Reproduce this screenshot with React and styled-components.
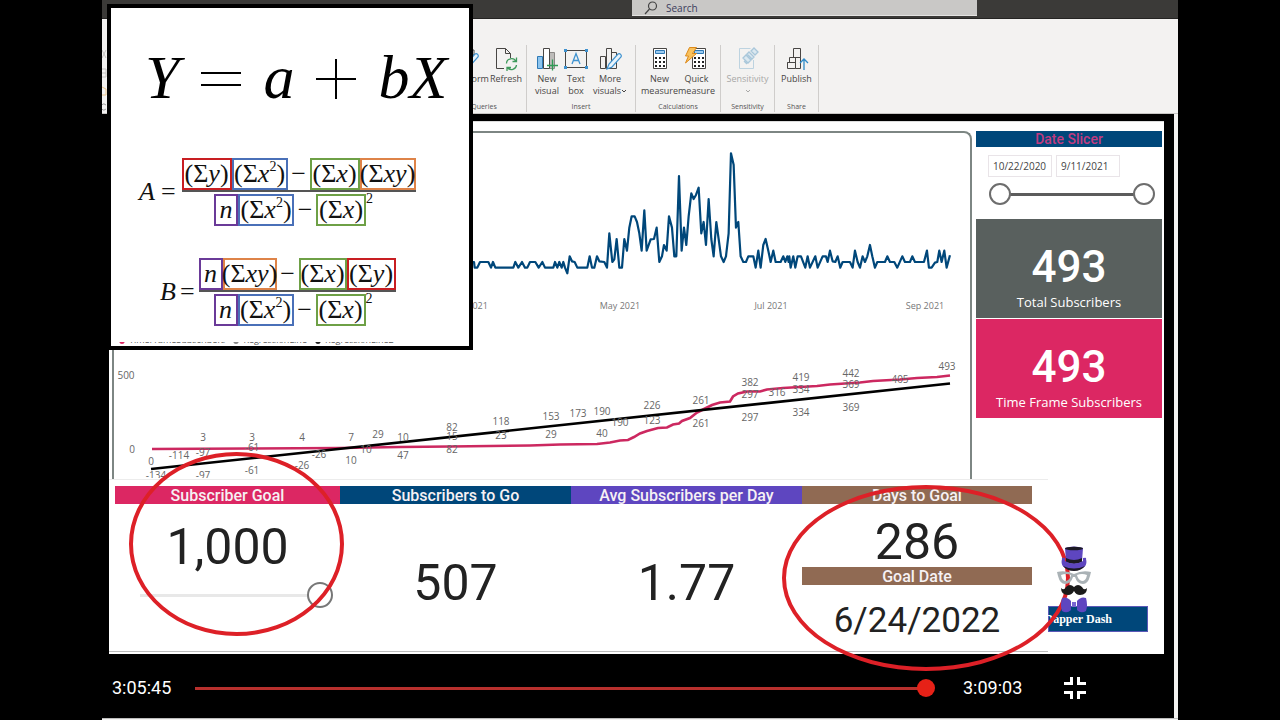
import React from "react";
import styled, { createGlobalStyle } from "styled-components";

const sans = '"Open Sans", "Noto Sans", sans-serif';
const din = 'Roboto, "Liberation Sans", sans-serif';
const serif = '"Liberation Serif", serif';

const Global = createGlobalStyle`
  *, *::before, *::after { box-sizing: border-box; }
  body { margin: 0; background: #000; font-family: ${sans}; }
  button, input { font: inherit; color: inherit; }
`;

const Page = styled.main`
  position: relative;
  min-height: 100vh;
  padding: 0 102px;
  background: #000;
  overflow: hidden;
`;

const TitleBar = styled.header`
  height: 19px;
  display: flex;
  padding: 0 201px 0 530px;
  background: #3b3a38;
  border-bottom: 1px solid #252423;
`;

const SearchBox = styled.label`
  flex: 1;
  height: 16px;
  display: flex;
  align-items: center;
  gap: 8px;
  padding: 0 12px;
  background: #c9c8c6;
  border-bottom: 1px solid #e4e3e1;
  svg { display: block; flex: none; }
`;

const SearchInput = styled.input`
  flex: 1;
  min-width: 0;
  border: 0;
  padding: 0;
  background: transparent;
  font-size: 10px;
  line-height: 14px;
  outline: none;
  &::placeholder { color: #3c3c5c; opacity: 1; }
`;

const Ribbon = styled.nav`
  height: 95px;
  display: flex;
  padding-top: 26px;
  background: #f3f2f1;
  border-bottom: 1px solid #c8c6c4;
`;

const RibbonEdge = styled.div`
  flex: none;
  width: 340px;
`;

const Group = styled.section`
  flex: none;
  width: ${(p) => p.$width}px;
  height: 67px;
  display: flex;
  flex-direction: column;
  justify-content: space-between;
  border-right: 1px solid #cfcdcb;
`;

const Tools = styled.div`
  display: flex;
  justify-content: center;
`;

const GroupName = styled.div`
  font-size: 7px;
  line-height: 10px;
  text-align: center;
  color: #555;
`;

const Tool = styled.button`
  flex: none;
  width: ${(p) => p.$width}px;
  display: flex;
  flex-direction: column;
  align-items: center;
  border: 0;
  padding: 2px 0 0;
  background: none;
  font-size: 9px;
  line-height: 12px;
  white-space: nowrap;
  color: ${(p) => (p.disabled ? "#a9a8a7" : "#484644")};
  svg { display: block; margin-bottom: 2px; }
`;

const ToolLine = styled.span`
  display: flex;
  align-items: center;
  height: 12px;
  svg { margin: 0; }
`;

const Player = styled.section`
  margin-right: 4px;
  padding: 7px 10px 0 7px;
  background: #000;
`;

const Shell = styled.div`
  background: #f3f2f1;
`;

const StatusStrip = styled.div`
  height: 2px;
  border-top: 1px solid #bbb;
`;

const Board = styled.article`
  background: #fff;
  border-top: 1px solid #ddd;
`;

const BoardTop = styled.div`
  display: flex;
  gap: 4px;
  height: 357px;
  padding: 9px 2px 0 3px;
`;

const ChartPanel = styled.section`
  flex: 1;
  min-width: 0;
  overflow: hidden;
  border: 2px solid #7d8683;
  border-bottom: 0;
  border-radius: 8px 8px 0 0;
`;

const Chart = styled.svg`
  display: block;
  width: 100%;
  height: auto;
  font-family: ${sans};
  font-size: 10px;
`;

const Side = styled.aside`
  flex: none;
  width: 186px;
  display: flex;
  flex-direction: column;
`;

const SlicerTitle = styled.h2`
  margin: 0;
  height: 16px;
  background: #00477a;
  color: #c23b80;
  text-align: center;
  font: 500 14px/17px ${din};
`;

const SlicerBody = styled.div`
  height: 72px;
  padding: 8px 8px 0 12px;
`;

const Dates = styled.div`
  display: flex;
  gap: 4px;
`;

const DateInput = styled.input`
  width: 64px;
  height: 22px;
  padding: 0 4px;
  border: 1px solid #e9e4e8;
  background: #fff;
  font-size: 10px;
  color: #444;
`;

const RangePair = styled.div`
  display: grid;
  margin: 6px 0 0 1px;
  height: 22px;
`;

const DateRange = styled.input`
  grid-area: 1 / 1;
  appearance: none;
  width: 166px;
  height: 22px;
  margin: 0;
  background: ${(p) =>
    p.$line ? "linear-gradient(#5c5c5c, #5c5c5c) center / 140px 3px no-repeat" : "transparent"};
  pointer-events: none;
  &::-webkit-slider-thumb {
    appearance: none;
    pointer-events: auto;
    width: 22px;
    height: 22px;
    border: 2px solid #6d6d6d;
    border-radius: 50%;
    background: #fff;
  }
`;

const StatCard = styled.section`
  height: 99px;
  padding-top: 23px;
  margin-bottom: 1px;
  background: ${(p) => p.$bg};
  color: #fff;
  text-align: center;
`;

const StatValue = styled.div`
  font: 500 44px/50px ${din};
`;

const StatLabel = styled.div`
  font-size: 13px;
  line-height: 20px;
`;

const BoardBottom = styled.div`
  display: flex;
  height: 175px;
`;

const Kpis = styled.section`
  position: relative;
  z-index: 1;
  flex: 1;
  display: grid;
  grid-template-columns: 225fr 231fr 231fr 230fr;
  margin-bottom: 2px;
  padding: 6px 16px 0 6px;
  background: #fff;
  border-top: 1px solid #ececec;
  border-bottom: 1px solid #bbb;
`;

const Kpi = styled.section`
  display: flex;
  flex-direction: column;
`;

const KpiTitle = styled.h3`
  margin: 0;
  height: 18px;
  background: ${(p) => p.$bg};
  color: #f6f1f4;
  text-align: center;
  font: 500 16px/19px ${din};
`;

const KpiValue = styled.div`
  padding-top: ${(p) => p.$top || 0}px;
  text-align: center;
  color: #222;
  font: 400 ${(p) => p.$size || 50}px/${(p) => p.$line || 63}px ${din};
`;

const GoalRange = styled.input`
  appearance: none;
  width: 193px;
  height: 26px;
  margin: 3px 0 0 25px;
  background: linear-gradient(#e8e8e8, #e8e8e8) 0 12px / 168px 3px no-repeat;
  &::-webkit-slider-thumb {
    appearance: none;
    width: 26px;
    height: 26px;
    border: 2px solid #777;
    border-radius: 50%;
    background: transparent;
  }
`;

const Ring = styled.div`
  position: absolute;
  left: ${(p) => p.$x}px;
  top: ${(p) => p.$y}px;
  width: ${(p) => p.$w}px;
  height: ${(p) => p.$h}px;
  border: 4px solid #dd2027;
  border-radius: 50%;
  pointer-events: none;
`;

const Brand = styled.div`
  flex: none;
  width: 116px;
  padding-top: 67px;
`;

const BrandLogo = styled.svg`
  position: relative;
  z-index: 1;
  display: block;
  margin: 0 0 -8px 9px;
`;

const BrandLink = styled.a`
  display: flex;
  justify-content: flex-end;
  align-items: center;
  width: 100px;
  height: 26px;
  padding-right: 35px;
  background: #00477a;
  border: 1px solid #5b58b8;
  color: #fff;
  text-decoration: none;
  white-space: nowrap;
  font: 700 12px/16px ${serif};
`;

const Controls = styled.footer`
  display: flex;
  align-items: center;
  height: 64px;
  padding: 4px 78px 0 3px;
  color: #fff;
  font: 400 18px/24px Roboto, sans-serif;
`;

const Time = styled.time`
  flex: none;
  width: 60px;
`;

const Seek = styled.input`
  appearance: none;
  flex: 1;
  min-width: 0;
  height: 18px;
  margin: 0 15px 0 23px;
  background: linear-gradient(#b8302d, #b8302d) 0 8px / 98% 3px no-repeat;
  &::-webkit-slider-thumb {
    appearance: none;
    width: 18px;
    height: 18px;
    border-radius: 50%;
    background: #e62117;
  }
`;

const ExitButton = styled.button`
  margin-left: 41px;
  padding: 0;
  border: 0;
  background: none;
  svg { display: block; }
`;

const FormulaCard = styled.section`
  position: absolute;
  z-index: 2;
  left: 107px;
  top: 4px;
  width: 366px;
  height: 346px;
  display: flex;
  flex-direction: column;
  border: 4px solid #000;
  background: #fff;
  color: #111;
  font-family: ${serif};
`;

const Headline = styled.div`
  display: flex;
  align-items: center;
  gap: 22px;
  height: 149px;
  padding: 0 0 12px 34px;
  font: italic 400 62px/72px ${serif};
  color: #000;
  svg { display: block; margin-top: 4px; }
`;

const Equation = styled.div`
  display: flex;
  align-items: center;
  gap: ${(p) => p.$gap}px;
  height: 70px;
  margin-bottom: ${(p) => p.$after}px;
  padding-left: ${(p) => p.$left}px;
  font-size: 26px;
  line-height: 30px;
`;

const Fraction = styled.div`
  display: flex;
  flex-direction: column;
`;

const Terms = styled.div`
  display: flex;
  align-items: center;
  justify-content: center;
  height: 35px;
  padding-right: ${(p) => p.$pad || 0}px;
  border-bottom: ${(p) => (p.$rule ? "2px solid #555" : "0")};
  sup { font-size: 14px; line-height: 14px; align-self: flex-start; }
`;

const Term = styled.span`
  display: flex;
  align-items: center;
  justify-content: center;
  width: ${(p) => p.$w}px;
  height: 32px;
  border: 2px solid ${(p) => p.$c};
  white-space: nowrap;
  sup { font-size: 14px; line-height: 14px; align-self: flex-start; }
`;

const Minus = styled.span`
  width: 22px;
  text-align: center;
`;

const LegendStrip = styled.div`
  display: flex;
  align-items: flex-end;
  gap: 8px;
  height: 4px;
  margin-top: auto;
  padding-left: 8px;
  overflow: hidden;
  color: #555;
  font: 400 9px/12px ${sans};
`;

const LegendItem = styled.span`
  display: flex;
  align-items: center;
  gap: 4px;
  &::before {
    content: "";
    width: 6px;
    height: 8px;
    border-radius: 50%;
    background: ${(p) => p.$c};
  }
`;

const dailyPoints =
  "0,426 12,426 14,443 22,443 30,426 55,426 63,443 69,426 76,443 130,443 136,426 145,443 156,426 165,443 172,443 180,426 196,426 206,443 217,426 225,443 250,443 255,426 262,443 268,426 275,443 280,426 285,443 292,460 299,409 306,424 314,426 322,443 352,443 359,409 366,443 373,443 381,409 388,424 403,426 411,443 418,340 427,426 433,418 440,357 448,443 456,443 463,357 471,392 478,323 485,289 494,289 501,306 508,340 515,392 523,271 530,392 542,358 552,357 560,323 568,426 576,409 582,375 590,392 597,289 606,323 613,409 619,409 627,168 635,392 642,323 649,375 656,289 664,220 671,237 678,225 686,203 694,340 701,306 708,375 716,237 724,357 731,409 739,306 746,357 753,409 761,426 768,409 776,340 783,100 791,134 798,323 805,306 812,409 820,426 828,426 835,409 850,409 857,443 865,392 872,443 880,375 887,357 895,392 902,426 910,392 917,426 932,426 940,409 946,426 952,409 956,426 958,409 962,443 970,409 976,443 983,409 993,409 1006,443 1013,409 1020,443 1036,409 1043,443 1058,409 1068,409 1073,426 1080,392 1088,424 1096,426 1103,409 1111,443 1118,426 1140,426 1148,443 1155,392 1163,426 1170,443 1178,409 1185,426 1192,409 1200,375 1207,409 1215,443 1222,426 1245,426 1252,409 1260,426 1273,426 1282,443 1297,409 1305,426 1320,426 1327,409 1335,426 1362,426 1371,392 1377,443 1385,443 1395,428 1402,426 1408,392 1415,426 1423,392 1430,443 1440,406";

const totalPoints =
  "152,449 250,448.5 340,448 400,447 450,446.5 530,445.5 560,444.5 597,444 610,442.5 620,440.5 628,440 634,437 640,433.5 647,431 658,428 667,427.5 673,424.5 679,423.5 682,421 690,418 697,412.5 703,409.5 712,405 720,402.5 730,401.5 733,396.5 738,393.5 747,391.5 760,391.5 767,389.5 783,388 817,386 830,384.5 860,382.5 873,381 900,379.5 917,378 937,377 950,375.5";

const labels = [
  [151, 461, "0"], [156, 475, "-134"], [179, 455, "-114"], [203, 437, "3"], [203, 452, "-97"], [203, 475, "-97"],
  [252, 437, "3"], [252, 447, "-61"], [252, 470, "-61"], [302, 437, "4"], [302, 465, "-26"], [319, 454, "-26"],
  [351, 437, "7"], [351, 460, "10"], [366, 449, "10"], [378, 434, "29"], [403, 437, "10"], [403, 455, "47"],
  [452, 427, "82"], [452, 436, "15"], [452, 449, "82"], [501, 421, "118"], [501, 435, "23"],
  [551, 416, "153"], [551, 434, "29"], [578, 413, "173"], [602, 411, "190"], [602, 433, "40"], [620, 422, "190"],
  [652, 405, "226"], [652, 420, "123"], [701, 400, "261"], [701, 423, "261"],
  [750, 382, "382"], [750, 394, "297"], [750, 417, "297"], [777, 392, "316"],
  [801, 377, "419"], [801, 389, "334"], [801, 412, "334"], [851, 373, "442"], [851, 384, "369"], [851, 407, "369"],
  [900, 379, "405"], [947, 366, "493"], [126, 375, "500"], [132, 449, "0"],
];

const ink = "#484644";
const blue = "#3f92cf";

const Chevron = () => (
  <svg width="6" height="6" viewBox="0 0 6 6" fill="none" stroke="currentColor"><path d="M1 2l2 2 2-2" /></svg>
);

const Icon = ({ children }) => (
  <svg width="24" height="24" viewBox="0 0 24 24" fill="none" stroke={ink} strokeWidth="1">{children}</svg>
);

const pencil = (
  <path d="M9 22l2-5 9-10c2-1 4 1 3 3l-9 10z" fill="#e9f4fb" stroke={blue} strokeWidth="1.2" />
);

const dots = [12, 16, 20].flatMap((y) =>
  [8, 12, 16].map((x) => <rect key={`${x}-${y}`} x={x - 1} y={y - 2} width="2" height="2" fill="#222" stroke="none" />)
);

const TransformIcon = () => (
  <Icon><path d="M3 3h16v5H3zM3 8v14h9M11 3v5" />{pencil}</Icon>
);
const RefreshIcon = () => (
  <Icon>
    <path d="M10 21.500H2.500v-20h9l5 5V11M11.500 1.500v5h5" />
    <g stroke="#3f9a5c" strokeWidth="1.300">
      <path d="M12.500 16.500a5 5 0 0 1 9.500-2M22.500 10.500v4h-4M22.500 18a5 5 0 0 1-9 2.500M13 24v-3.500h4" />
    </g>
  </Icon>
);
const NewVisualIcon = () => (
  <Icon>
    <path d="M2.500 9.500h5v12h-5z" fill="#8cc4ee" stroke="#2e79b5" />
    <path d="M14.500 5.500h5v16h-5z" fill="#bdbcba" stroke="#8a8886" />
    <path d="M8.500 1.500h6v20h-6z" fill="#fff" />
    <path d="M17.500 12.500v11M12 18.500h11" stroke="#2f9a55" strokeWidth="1.300" />
  </Icon>
);
const TextBoxIcon = () => (
  <Icon>
    <path d="M1.500 3.500h21v17h-21z" />
    <path d="M8 17l4-10.500L16 17M9.500 13.500h5" stroke={blue} strokeWidth="1.300" />
    <path d="M0 2h3v3H0zM21 2h3v3h-3zM0 19h3v3H0zM21 19h3v3h-3z" fill={blue} stroke="none" />
  </Icon>
);
const MoreVisualsIcon = () => (
  <Icon><path d="M2.500 9.500h5v12h-5zM8.500 1.500h5v20h-5zM13.500 5.500h5v16h-5z" />{pencil}</Icon>
);
const Calculator = () => (
  <>
    <path d="M5.500 1.500h13v20h-13z" fill="#fff" />
    <path d="M7.500 3.500h9v3h-9z" fill="#9ccbf0" stroke="#2e79b5" />
    {dots}
  </>
);
const MeasureIcon = () => <Icon><Calculator /></Icon>;
const QuickIcon = () => (
  <Icon>
    <g transform="translate(2 0)"><Calculator /></g>
    <path d="M4.500 0.500h7l-4 6h4L0.500 16l3-7H0.500z" fill="#f9c15c" stroke="#dc8a1b" />
  </Icon>
);
const SensitivityIcon = () => (
  <Icon>
    <path d="M17.500 13v8.500h-14v-20h11" stroke="#bdd3e0" />
    <path d="M7 11l3-3 5 5-3 3zM11 7l2-2 5 5-2 2zM15 4l3-3 4 4-3 3zM8 14l3 3" fill="#dbe8f0" stroke="#a9c7da" strokeWidth="1.300" />
  </Icon>
);
const PublishIcon = () => (
  <Icon>
    <path d="M8.500 1.500h7v9h-7zM4.500 10.500h6v11h-8v-6h2zM10.500 10.500h5M10.500 21.500h5v-11M2.500 15.500h8" />
    <path d="M19 23V12M15 16l4-4 4 4" stroke="#2e8ac8" strokeWidth="1.300" />
  </Icon>
);

const sumY = <>(Σ<i>y</i>)</>;
const sumX2 = <>(Σ<i>x</i><sup>2</sup>)</>;
const sumX = <>(Σ<i>x</i>)</>;
const sumXY = <>(Σ<i>xy</i>)</>;
const RED = "#c81e22", BLUE = "#4a70b8", GREEN = "#6ea046", ORANGE = "#de8348", PURPLE = "#6a3a98";

const Denominator = ({ pad }) => (
  <Terms $pad={pad}>
    <Term $w={24} $c={PURPLE}><i>n</i></Term>
    <Term $w={56} $c={BLUE}>{sumX2}</Term>
    <Minus>−</Minus>
    <Term $w={50} $c={GREEN}>{sumX}</Term>
    <sup>2</sup>
  </Terms>
);

function Formula() {
  return (
    <FormulaCard aria-label="Linear regression formula">
      <Headline>
        <span>Y</span>
        <svg width="40" height="14" viewBox="0 0 40 14"><path d="M0 1h40M0 13h40" stroke="#000" strokeWidth="2" /></svg>
        <span>a</span>
        <svg width="40" height="40" viewBox="0 0 40 40"><path d="M0 20h40M20 0v40" stroke="#000" strokeWidth="2" /></svg>
        <span>bX</span>
      </Headline>
      <Equation $left={28} $gap={6} $after={30}>
        <i>A</i><span>=</span>
        <Fraction>
          <Terms $rule>
            <Term $w={50} $c={RED}>{sumY}</Term>
            <Term $w={56} $c={BLUE}>{sumX2}</Term>
            <Minus>−</Minus>
            <Term $w={50} $c={GREEN}>{sumX}</Term>
            <Term $w={56} $c={ORANGE}>{sumXY}</Term>
          </Terms>
          <Denominator pad={10} />
        </Fraction>
      </Equation>
      <Equation $left={49} $gap={4} $after={0}>
        <i>B</i><span>=</span>
        <Fraction>
          <Terms $rule>
            <Term $w={24} $c={PURPLE}><i>n</i></Term>
            <Term $w={54} $c={ORANGE}>{sumXY}</Term>
            <Minus>−</Minus>
            <Term $w={48} $c={GREEN}>{sumX}</Term>
            <Term $w={49} $c={RED}>{sumY}</Term>
          </Terms>
          <Denominator pad={8} />
        </Fraction>
      </Equation>
      <LegendStrip>
        <LegendItem $c="#dc2763">TimeFrameSubscribers</LegendItem>
        <LegendItem $c="#888">RegressionLine</LegendItem>
        <LegendItem $c="#222">RegressionLine2</LegendItem>
      </LegendStrip>
    </FormulaCard>
  );
}

function RibbonTool({ icon, lines, width, menu, disabled }) {
  return (
    <Tool type="button" $width={width} disabled={disabled}>
      {icon}
      {lines.map((t, i) => (
        <ToolLine key={t}>{t}{menu === "inline" && i === lines.length - 1 && <Chevron />}</ToolLine>
      ))}
      {menu === "below" && <ToolLine><Chevron /></ToolLine>}
    </Tool>
  );
}

export default function App() {
  return (
    <Page>
      <Global />
      <Shell>
        <TitleBar>
          <SearchBox>
            <svg width="14" height="14" viewBox="0 0 14 14" fill="none" stroke="#444" strokeWidth="1.200">
              <circle cx="8.500" cy="5" r="4" /><path d="M5.500 8L1 13" />
            </svg>
            <SearchInput type="search" placeholder="Search" aria-label="Search" />
          </SearchBox>
        </TitleBar>
        <Ribbon>
          <RibbonEdge>
            <svg width="5" height="66" viewBox="0 0 5 66" fill="none">
              <path d="M0 5l4 8M4 5l-4 8M0 24h4v8H0M0 28h4" stroke="#c4c2c0" />
              <path d="M0 42l4 2v6H0" stroke="#e8c48c" />
              <path d="M4 60a3 3 0 1 0 0 4" stroke="#999" />
            </svg>
          </RibbonEdge>
          <Group $width={85}>
            <Tools>
              <RibbonTool width={44} icon={<TransformIcon />} lines={["Transform"]} menu="below" />
              <RibbonTool width={34} icon={<RefreshIcon />} lines={["Refresh"]} />
            </Tools>
            <GroupName>Queries</GroupName>
          </Group>
          <Group $width={109}>
            <Tools>
              <RibbonTool width={28} icon={<NewVisualIcon />} lines={["New", "visual"]} />
              <RibbonTool width={30} icon={<TextBoxIcon />} lines={["Text", "box"]} />
              <RibbonTool width={38} icon={<MoreVisualsIcon />} lines={["More", "visuals"]} menu="inline" />
            </Tools>
            <GroupName>Insert</GroupName>
          </Group>
          <Group $width={85}>
            <Tools>
              <RibbonTool width={37} icon={<MeasureIcon />} lines={["New", "measure"]} />
              <RibbonTool width={37} icon={<QuickIcon />} lines={["Quick", "measure"]} />
            </Tools>
            <GroupName>Calculations</GroupName>
          </Group>
          <Group $width={54}>
            <Tools>
              <RibbonTool width={44} icon={<SensitivityIcon />} lines={["Sensitivity"]} menu="below" disabled />
            </Tools>
            <GroupName>Sensitivity</GroupName>
          </Group>
          <Group $width={44}>
            <Tools>
              <RibbonTool width={34} icon={<PublishIcon />} lines={["Publish"]} />
            </Tools>
            <GroupName>Share</GroupName>
          </Group>
        </Ribbon>

        <Player>
          <Board>
            <BoardTop>
              <ChartPanel>
                <Chart viewBox="114 133 856 207" role="img" aria-label="Subscribers per day">
                  <g transform="translate(470 120) scale(0.3333)">
                    <polyline points={dailyPoints} fill="none" stroke="#00477a" strokeWidth="6.6" strokeLinejoin="round" />
                  </g>
                  <g fill="#777" textAnchor="middle" fontSize="9">
                    <text x="468" y="309">Mar 2021</text>
                    <text x="620" y="309">May 2021</text>
                    <text x="771" y="309">Jul 2021</text>
                    <text x="925" y="309">Sep 2021</text>
                  </g>
                </Chart>
                <Chart viewBox="114 340 856 138" role="img" aria-label="Total subscribers and regression line">
                  <polyline points={totalPoints} fill="none" stroke="#cc2860" strokeWidth="2.600" />
                  <path d="M151 469L950 383.500" stroke="#000" strokeWidth="2.600" />
                  <g fill="#666" textAnchor="middle">
                    {labels.map(([x, y, t]) => <text key={`${x}-${y}`} x={x} y={y + 4}>{t}</text>)}
                  </g>
                </Chart>
              </ChartPanel>
              <Side>
                <SlicerTitle>Date Slicer</SlicerTitle>
                <SlicerBody>
                  <Dates>
                    <DateInput aria-label="From" defaultValue="10/22/2020" />
                    <DateInput aria-label="To" defaultValue="9/11/2021" />
                  </Dates>
                  <RangePair>
                    <DateRange $line type="range" aria-label="Range start" defaultValue="0" />
                    <DateRange type="range" aria-label="Range end" defaultValue="100" />
                  </RangePair>
                </SlicerBody>
                <StatCard $bg="#59605e">
                  <StatValue>493</StatValue>
                  <StatLabel>Total Subscribers</StatLabel>
                </StatCard>
                <StatCard $bg="#dc2763">
                  <StatValue>493</StatValue>
                  <StatLabel>Time Frame Subscribers</StatLabel>
                </StatCard>
              </Side>
            </BoardTop>

            <BoardBottom>
              <Kpis>
                <Kpi>
                  <KpiTitle $bg="#dc2763">Subscriber Goal</KpiTitle>
                  <KpiValue $top={12}>1,000</KpiValue>
                  <GoalRange type="range" aria-label="Subscriber goal" min="0" max="1000" defaultValue="1000" />
                </Kpi>
                <Kpi>
                  <KpiTitle $bg="#00477a">Subscribers to Go</KpiTitle>
                  <KpiValue $top={48}>507</KpiValue>
                </Kpi>
                <Kpi>
                  <KpiTitle $bg="#5e46c0">Avg Subscribers per Day</KpiTitle>
                  <KpiValue $top={48}>1.77</KpiValue>
                </Kpi>
                <Kpi>
                  <KpiTitle $bg="#906a53">Days to Goal</KpiTitle>
                  <KpiValue $top={13} $line={50}>286</KpiValue>
                  <KpiTitle $bg="#906a53">Goal Date</KpiTitle>
                  <KpiValue $size={35} $line={72}>6/24/2022</KpiValue>
                </Kpi>
                <Ring $x={20} $y={-28} $w={215} $h={184} />
                <Ring $x={673} $y={5} $w={288} $h={186} />
              </Kpis>
              <Brand>
                <BrandLogo width="34" height="68" viewBox="0 0 34 68" aria-hidden="true">
                  <path d="M8 2q9-3 18 0l-1 13H9z" fill="#5e46c0" />
                  <ellipse cx="17" cy="2.500" rx="9" ry="1.800" fill="#1c1a24" />
                  <path d="M9 12q8 4 16 0v4q-8 4-16 0z" fill="#1c1a24" />
                  <path d="M5 13q-1-2 3-1v3q9 5 18 0v-3q4-1 3 1 3 10-12 11Q2 23 5 13z" fill="#5e46c0" />
                  <path d="M6 20q11 5 22 0-4 5-11 5t-11-5z" fill="#1c1a24" />
                  <path
                    d="M0 26q9-2 17 2 8-4 17-2l-1 4q-2 8-7 8-6 0-8-7h-2q-2 7-8 7-5 0-7-8zM4 29q1 6 5 6 4-1 5-6-5-2-10 0zM30 29q-1 6-5 6-4-1-5-6 5-2 10 0z"
                    fill="#aab2b6" fillRule="evenodd"
                  />
                  <path d="M17 41q-4-4-8 0-2 4-5 1 0 7 7 7 4 0 6-4 2 4 6 4 7 0 7-7-3 3-5-1-4-4-8 0z" fill="#1b1b1b" />
                  <path d="M5 52q5-2 9 3v9q-4 4-9 1-2-6 0-13zM29 52q-5-2-9 3v9q4 4 9 1 2-6 0-13z" fill="#5e46c0" />
                  <path d="M15 56h4v5h-4z" fill="#7a66d2" />
                </BrandLogo>
                <BrandLink href="#dapper-dash">Dapper Dash</BrandLink>
              </Brand>
            </BoardBottom>
          </Board>
          <Controls>
            <Time>3:05:45</Time>
            <Seek type="range" aria-label="Seek" min="0" max="11343" defaultValue="11145" />
            <Time>3:09:03</Time>
            <ExitButton type="button" aria-label="Exit full screen">
              <svg width="22" height="22" viewBox="0 0 22 22" fill="none" stroke="#fff" strokeWidth="3">
                <path d="M0 6.500h7.500V0M22 6.500h-7.500V0M0 15.500h7.500V22M22 15.500h-7.500V22" />
              </svg>
            </ExitButton>
          </Controls>
        </Player>
        <StatusStrip />
      </Shell>
      <Formula />
    </Page>
  );
}
